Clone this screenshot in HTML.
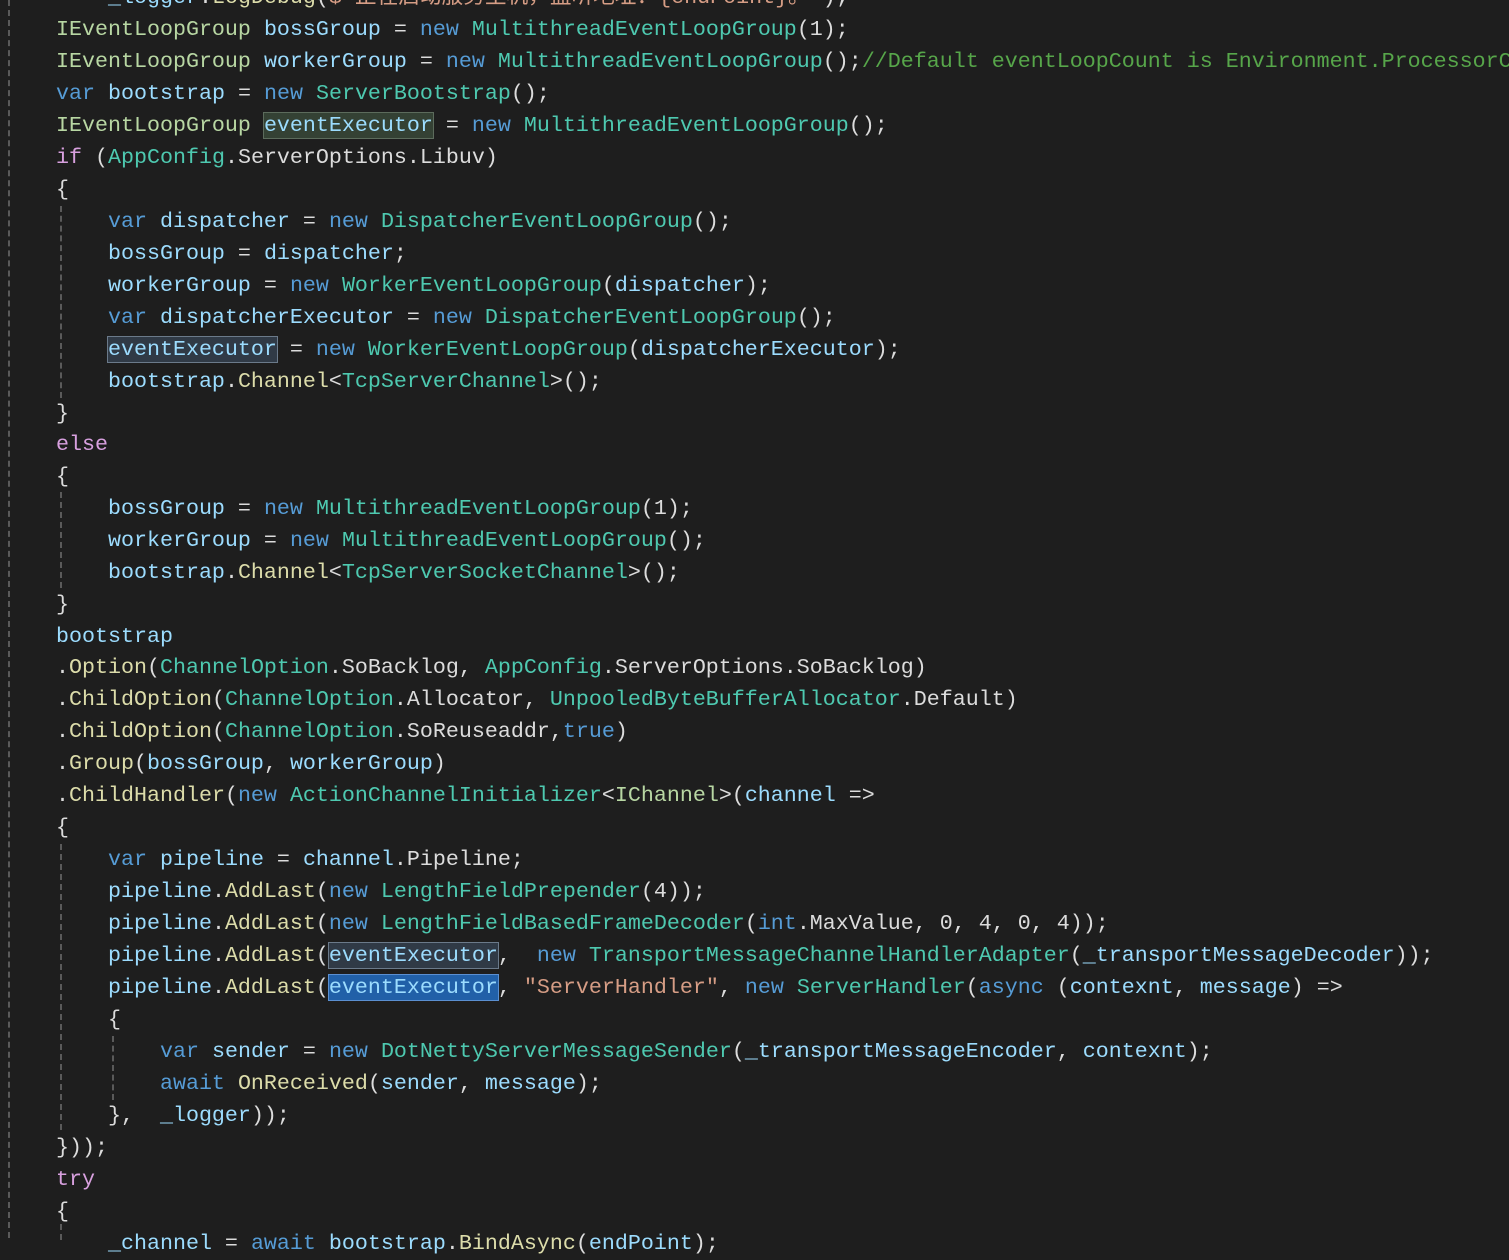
<!DOCTYPE html>
<html><head><meta charset="utf-8"><style>
html,body{margin:0;padding:0;background:#1e1e1e;width:1509px;height:1238px;overflow:hidden}
#w{position:absolute;left:0;top:2px;width:1509px;height:1238px}
.l{position:absolute;left:4px;height:32px;line-height:32px;white-space:pre;font-family:"Liberation Mono","Noto Sans CJK SC",monospace;font-size:21.67px;color:#dcdcdc}
.t{color:#4ec9b0}.k{color:#569cd6}.v{color:#9cdcfe}.m{color:#dcdcaa}.i{color:#b8d7a3}.c{color:#d8a0df}.s{color:#d69d85}.g{color:#57a64a}
.h1{background:#344134;outline:1px solid #5c6b5c}
.h2{background:#303a46;outline:1px solid #6b7a8a}
.h3{background:#2160a8;outline:1px solid #5b8fd0}
.gd{position:absolute;width:0;border-left:2px dashed #5a5a5a}
</style></head><body>
<div class="gd" style="left:8px;top:0;height:1238px"></div>
<div id="w">
<div class="gd" style="left:60px;top:204px;height:192px"></div>
<div class="gd" style="left:60px;top:490px;height:96px"></div>
<div class="gd" style="left:60px;top:842px;height:286px"></div>
<div class="gd" style="left:60px;top:1222px;height:16px"></div>
<div class="gd" style="left:112px;top:1034px;height:64px"></div>
<div class="l" style="top:-20px">        <span class="v">_logger</span>.<span class="m">LogDebug</span>(<span class="s">$"正在启动服务主机，监听地址：{endPoint}。"</span>);</div>
<div class="l" style="top:12px">    <span class="i">IEventLoopGroup</span> <span class="v">bossGroup</span> = <span class="k">new</span> <span class="t">MultithreadEventLoopGroup</span>(1);</div>
<div class="l" style="top:44px">    <span class="i">IEventLoopGroup</span> <span class="v">workerGroup</span> = <span class="k">new</span> <span class="t">MultithreadEventLoopGroup</span>();<span class="g">//Default eventLoopCount is Environment.ProcessorCount</span></div>
<div class="l" style="top:76px">    <span class="k">var</span> <span class="v">bootstrap</span> = <span class="k">new</span> <span class="t">ServerBootstrap</span>();</div>
<div class="l" style="top:108px">    <span class="i">IEventLoopGroup</span> <span class="v h1">eventExecutor</span> = <span class="k">new</span> <span class="t">MultithreadEventLoopGroup</span>();</div>
<div class="l" style="top:140px">    <span class="c">if</span> (<span class="t">AppConfig</span>.ServerOptions.Libuv)</div>
<div class="l" style="top:172px">    {</div>
<div class="l" style="top:204px">        <span class="k">var</span> <span class="v">dispatcher</span> = <span class="k">new</span> <span class="t">DispatcherEventLoopGroup</span>();</div>
<div class="l" style="top:236px">        <span class="v">bossGroup</span> = <span class="v">dispatcher</span>;</div>
<div class="l" style="top:268px">        <span class="v">workerGroup</span> = <span class="k">new</span> <span class="t">WorkerEventLoopGroup</span>(<span class="v">dispatcher</span>);</div>
<div class="l" style="top:300px">        <span class="k">var</span> <span class="v">dispatcherExecutor</span> = <span class="k">new</span> <span class="t">DispatcherEventLoopGroup</span>();</div>
<div class="l" style="top:332px">        <span class="v h2">eventExecutor</span> = <span class="k">new</span> <span class="t">WorkerEventLoopGroup</span>(<span class="v">dispatcherExecutor</span>);</div>
<div class="l" style="top:364px">        <span class="v">bootstrap</span>.<span class="m">Channel</span>&lt;<span class="t">TcpServerChannel</span>&gt;();</div>
<div class="l" style="top:396px">    }</div>
<div class="l" style="top:427px">    <span class="c">else</span></div>
<div class="l" style="top:459px">    {</div>
<div class="l" style="top:491px">        <span class="v">bossGroup</span> = <span class="k">new</span> <span class="t">MultithreadEventLoopGroup</span>(1);</div>
<div class="l" style="top:523px">        <span class="v">workerGroup</span> = <span class="k">new</span> <span class="t">MultithreadEventLoopGroup</span>();</div>
<div class="l" style="top:555px">        <span class="v">bootstrap</span>.<span class="m">Channel</span>&lt;<span class="t">TcpServerSocketChannel</span>&gt;();</div>
<div class="l" style="top:587px">    }</div>
<div class="l" style="top:619px">    <span class="v">bootstrap</span></div>
<div class="l" style="top:650px">    .<span class="m">Option</span>(<span class="t">ChannelOption</span>.SoBacklog, <span class="t">AppConfig</span>.ServerOptions.SoBacklog)</div>
<div class="l" style="top:682px">    .<span class="m">ChildOption</span>(<span class="t">ChannelOption</span>.Allocator, <span class="t">UnpooledByteBufferAllocator</span>.Default)</div>
<div class="l" style="top:714px">    .<span class="m">ChildOption</span>(<span class="t">ChannelOption</span>.SoReuseaddr,<span class="k">true</span>)</div>
<div class="l" style="top:746px">    .<span class="m">Group</span>(<span class="v">bossGroup</span>, <span class="v">workerGroup</span>)</div>
<div class="l" style="top:778px">    .<span class="m">ChildHandler</span>(<span class="k">new</span> <span class="t">ActionChannelInitializer</span>&lt;<span class="i">IChannel</span>&gt;(<span class="v">channel</span> =&gt;</div>
<div class="l" style="top:810px">    {</div>
<div class="l" style="top:842px">        <span class="k">var</span> <span class="v">pipeline</span> = <span class="v">channel</span>.Pipeline;</div>
<div class="l" style="top:874px">        <span class="v">pipeline</span>.<span class="m">AddLast</span>(<span class="k">new</span> <span class="t">LengthFieldPrepender</span>(4));</div>
<div class="l" style="top:906px">        <span class="v">pipeline</span>.<span class="m">AddLast</span>(<span class="k">new</span> <span class="t">LengthFieldBasedFrameDecoder</span>(<span class="k">int</span>.MaxValue, 0, 4, 0, 4));</div>
<div class="l" style="top:938px">        <span class="v">pipeline</span>.<span class="m">AddLast</span>(<span class="v h2">eventExecutor</span>,  <span class="k">new</span> <span class="t">TransportMessageChannelHandlerAdapter</span>(<span class="v">_transportMessageDecoder</span>));</div>
<div class="l" style="top:970px">        <span class="v">pipeline</span>.<span class="m">AddLast</span>(<span class="v h3">eventExecutor</span>, <span class="s">"ServerHandler"</span>, <span class="k">new</span> <span class="t">ServerHandler</span>(<span class="k">async</span> (<span class="v">contexnt</span>, <span class="v">message</span>) =&gt;</div>
<div class="l" style="top:1002px">        {</div>
<div class="l" style="top:1034px">            <span class="k">var</span> <span class="v">sender</span> = <span class="k">new</span> <span class="t">DotNettyServerMessageSender</span>(<span class="v">_transportMessageEncoder</span>, <span class="v">contexnt</span>);</div>
<div class="l" style="top:1066px">            <span class="k">await</span> <span class="m">OnReceived</span>(<span class="v">sender</span>, <span class="v">message</span>);</div>
<div class="l" style="top:1098px">        },  <span class="v">_logger</span>));</div>
<div class="l" style="top:1130px">    }));</div>
<div class="l" style="top:1162px">    <span class="c">try</span></div>
<div class="l" style="top:1194px">    {</div>
<div class="l" style="top:1226px">        <span class="v">_channel</span> = <span class="k">await</span> <span class="v">bootstrap</span>.<span class="m">BindAsync</span>(<span class="v">endPoint</span>);</div>
</div>
</body></html>
